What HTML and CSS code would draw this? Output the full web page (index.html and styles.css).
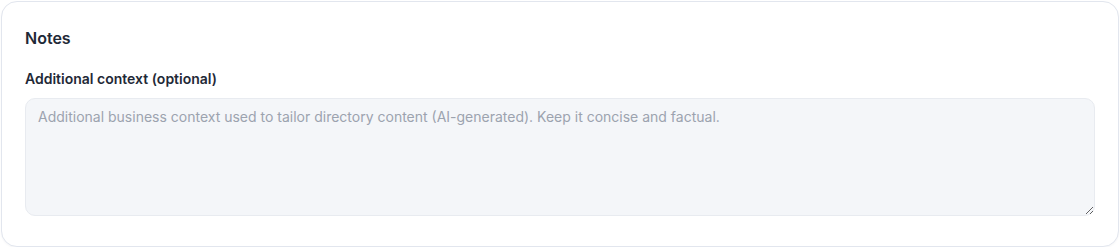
FILE: index.html
```html
<!DOCTYPE html>
<html lang="en">
<head>
    <meta charset="UTF-8">
    <meta name="viewport" content="width=device-width, initial-scale=1.0">
    <title>Notes</title>
    <link rel="stylesheet" href="styles.css">
</head>
<body>
    <div class="card">
        <h3 class="card-title">Notes</h3>
        <label class="field-label" for="context">Additional context (optional)</label>
        <textarea id="context" class="field-input" placeholder="Additional business context used to tailor directory content (AI-generated). Keep it concise and factual."></textarea>
    </div>
</body>
</html>
```

FILE: styles.css
```css
body {
    font-family: Inter, "Noto Sans", sans-serif;
    background-color: #ffffff;
    color: #1f2937;
    margin: 0;
    padding: 1px 1px 0 1px;
}

.card {
    background-color: #ffffff;
    border: 1px solid #e2e6ee;
    border-radius: 16px;
    padding: 24px 23px 30px 23px;
    box-shadow: 0 1px 2px rgba(15, 23, 42, 0.04);
}

.card-title {
    font-size: 16px;
    font-weight: 600;
    line-height: 24px;
    margin: 0 0 19px 0;
    color: #1f2937;
}

.field-label {
    display: block;
    font-size: 14px;
    font-weight: 600;
    line-height: 20px;
    margin-bottom: 9px;
    color: #1f2937;
}

.field-input {
    display: block;
    width: 100%;
    box-sizing: border-box;
    height: 118px;
    padding: 8px 12px;
    font-family: inherit;
    font-size: 14px;
    line-height: 20px;
    color: #1f2937;
    background-color: #f4f6f9;
    border: 1px solid #e8ebf0;
    border-radius: 10px;
    outline: none;
}

.field-input::placeholder {
    color: #9ca3af;
}
```
